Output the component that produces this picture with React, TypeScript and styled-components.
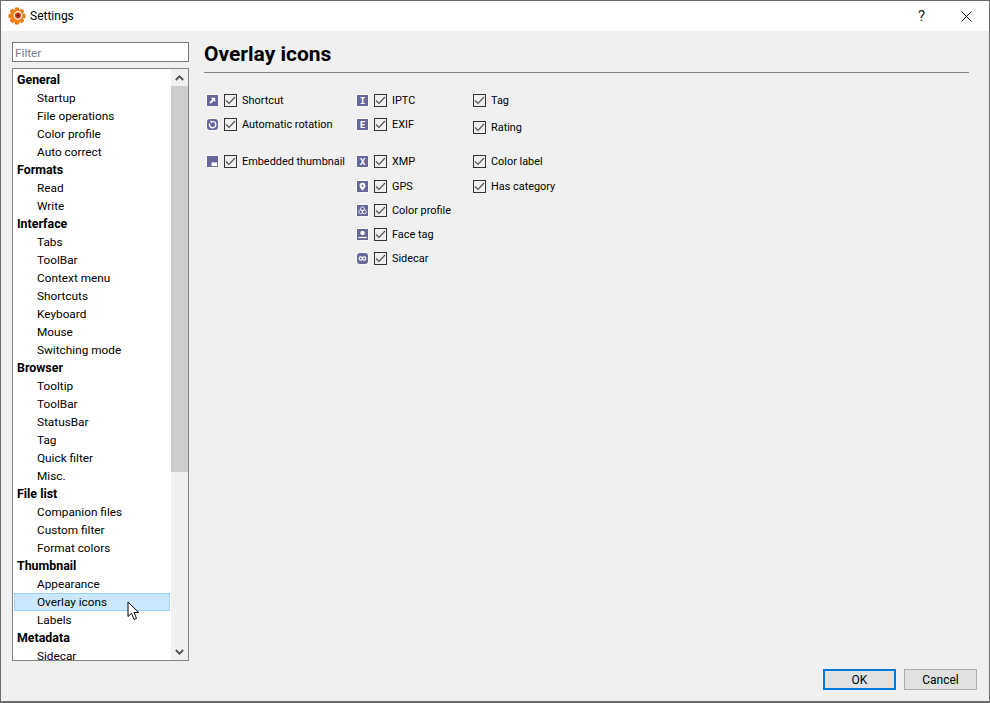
import React from "react"
import styled, { createGlobalStyle } from "styled-components"

const GlobalStyle = createGlobalStyle`
  html, body {
    margin: 0;
    padding: 0;
    background: #2b2b2b;
  }
  body {
    font-family: Roboto, "Noto Sans", sans-serif;
    font-size: 12px;
    color: #000;
  }
`

const Window = styled.div`
  box-sizing: border-box;
  width: 990px;
  height: 703px;
  border: 1px solid #6d6d6d;
  border-bottom-width: 2px;
  background: #f0f0f0;
  display: flex;
  flex-direction: column;
  overflow: hidden;
`

const TitleBar = styled.div`
  height: 30px;
  flex: none;
  background: #fff;
  display: flex;
  align-items: center;
  padding-left: 7px;
`

const TitleText = styled.span`
  margin-left: 4px;
  flex: 1;
  font-size: 12px;
  padding-bottom: 1px;
`

const TitleButton = styled.div`
  width: 45px;
  height: 30px;
  display: flex;
  align-items: center;
  justify-content: center;
  font-size: 15px;
  color: #222;
`

const Body = styled.div`
  flex: 1;
  min-height: 0;
  display: flex;
  padding: 11px 20px 0 11px;
`

const Sidebar = styled.div`
  width: 177px;
  flex: none;
  display: flex;
  flex-direction: column;
  gap: 6px;
`

const FilterInput = styled.div`
  box-sizing: border-box;
  height: 20px;
  border: 1px solid #7a7a7a;
  background: #fff;
  color: #7a7a8a;
  font-size: 11.8px;
  line-height: 20px;
  padding-left: 2px;
`

const TreeBox = styled.div`
  box-sizing: border-box;
  position: relative;
  height: 595px;
  border: 1px solid #828282;
  background: #fff;
  display: flex;
  overflow: hidden;
`

const TreeRows = styled.div`
  flex: 1;
  min-width: 0;
  padding: 2px 1px 0 1px;
`

const TreeRow = styled.div<{ $group?: boolean; $selected?: boolean }>`
  box-sizing: border-box;
  height: 18px;
  line-height: 16px;
  padding-left: ${p => (p.$group ? "2px" : "22px")};
  font-size: ${p => (p.$group ? "12.4px" : "11.8px")};
  font-weight: ${p => (p.$group ? 700 : 400)};
  border: 1px solid ${p => (p.$selected ? "#99d1ff" : "transparent")};
  background: ${p => (p.$selected ? "#cce8ff" : "transparent")};
  white-space: nowrap;
`

const ScrollBar = styled.div`
  width: 17px;
  flex: none;
  background: #f0f0f0;
  display: flex;
  flex-direction: column;
`

const ScrollArrow = styled.div`
  height: 17px;
  flex: none;
  display: flex;
  align-items: center;
  justify-content: center;
`

const ScrollTrack = styled.div`
  flex: 1;
`

const ScrollThumb = styled.div`
  height: 386px;
  background: #cdcdcd;
`

const CursorMark = styled.svg`
  position: absolute;
  left: 114px;
  top: 532px;
`

const Content = styled.div`
  flex: 1;
  min-width: 0;
  margin-left: 15px;
  display: flex;
  flex-direction: column;
`

const Heading = styled.h1`
  margin: 0;
  font-size: 21px;
  line-height: 25px;
  font-weight: 700;
  padding-bottom: 5px;
  border-bottom: 1px solid #808080;
`

const Columns = styled.div`
  display: flex;
  padding: 15px 0 0 3px;
`

const OptionColumn = styled.div<{ $width: number }>`
  width: ${p => p.$width}px;
  flex: none;
  display: flex;
  flex-direction: column;
`

const OptionRow = styled.div<{ $gap?: number }>`
  height: 24px;
  margin-top: ${p => p.$gap ?? 0}px;
  display: flex;
  align-items: center;
  white-space: nowrap;
  font-size: 10.9px;
`

const OverlayIcon = styled.span<{ $round?: boolean }>`
  box-sizing: border-box;
  width: 11px;
  height: 11px;
  flex: none;
  margin-right: 6px;
  border-radius: ${p => (p.$round ? "3px" : "0")};
  background: #66669a;
  box-shadow: 0 0 0 1px rgba(255, 255, 255, 0.55);
  color: #fff;
  font-family: "DejaVu Sans Mono", monospace;
  font-weight: 700;
  font-size: 9.5px;
  line-height: 11px;
  display: flex;
  align-items: center;
  justify-content: center;
  overflow: hidden;
`

const CheckBox = styled.span`
  box-sizing: border-box;
  width: 13px;
  height: 13px;
  flex: none;
  margin-right: 5px;
  border: 1px solid #333;
  display: flex;
  align-items: center;
  justify-content: center;
`

const Footer = styled.div`
  height: 40px;
  flex: none;
  display: flex;
  justify-content: flex-end;
  gap: 8px;
  padding: 8px 12px 0 0;
  box-sizing: border-box;
`

const DialogButton = styled.div<{ $primary?: boolean }>`
  box-sizing: border-box;
  width: 73px;
  height: 21px;
  background: #e1e1e1;
  border: ${p => (p.$primary ? "2px solid #0078d7" : "1px solid #adadad")};
  display: flex;
  align-items: center;
  justify-content: center;
`

type TreeEntry = [label: string, group?: boolean]

const treeEntries: TreeEntry[] = [
  ["General", true],
  ["Startup"],
  ["File operations"],
  ["Color profile"],
  ["Auto correct"],
  ["Formats", true],
  ["Read"],
  ["Write"],
  ["Interface", true],
  ["Tabs"],
  ["ToolBar"],
  ["Context menu"],
  ["Shortcuts"],
  ["Keyboard"],
  ["Mouse"],
  ["Switching mode"],
  ["Browser", true],
  ["Tooltip"],
  ["ToolBar"],
  ["StatusBar"],
  ["Tag"],
  ["Quick filter"],
  ["Misc."],
  ["File list", true],
  ["Companion files"],
  ["Custom filter"],
  ["Format colors"],
  ["Thumbnail", true],
  ["Appearance"],
  ["Overlay icons"],
  ["Labels"],
  ["Metadata", true],
  ["Sidecar"],
]

const Logo = () => (
  <svg width="18" height="18" viewBox="0 0 18 18">
    <g fill="#ee7a12">
      {[0, 45, 90, 135, 180, 225, 270, 315].map(a => (
        <rect key={a} x="6.8" y="0.5" width="4.4" height="4" rx="1" transform={`rotate(${a} 9 9)`} />
      ))}
    </g>
    <circle cx="9" cy="9" r="6.6" fill="#f0841a" />
    <circle cx="10" cy="8.5" r="4.4" fill="#fdeede" />
    <circle cx="10" cy="8.5" r="3" fill="#d0341c" />
    <circle cx="10" cy="8.5" r="1.1" fill="#6a1208" />
  </svg>
)

const Check = () => (
  <svg width="11" height="11" viewBox="0 0 11 11">
    <path d="M1 5.5 L4 8.5 L10 2" fill="none" stroke="#555" strokeWidth="1.2" />
  </svg>
)

const Chevron = ({ up }: { up?: boolean }) => (
  <svg width="9" height="6" viewBox="0 0 9 6">
    <path
      d={up ? "M0.8 5 L4.5 1.3 L8.2 5" : "M0.8 1 L4.5 4.7 L8.2 1"}
      fill="none"
      stroke="#505050"
      strokeWidth="1.8"
    />
  </svg>
)

const glyphs: Record<string, React.ReactNode> = {
  shortcut: <path d="M4 3h5v5L7.4 6.4 4.2 9.6 2.6 8l3.2-3.2z" fill="#fff" />,
  rotation: (
    <>
      <path d="M6.4 2.6a3.5 3.5 0 1 1-3.6 2.4" fill="none" stroke="#fff" strokeWidth="1.6" />
      <path d="M3.4 1.6l3.4 1-2.4 2.4z" fill="#fff" />
    </>
  ),
  thumbnail: <rect x="5" y="7" width="6" height="4" fill="#fff" />,
  gps: (
    <>
      <path d="M6 2a3.2 3.2 0 0 1 3.2 3.2C9.2 7.4 6 10.5 6 10.5S2.8 7.4 2.8 5.2A3.2 3.2 0 0 1 6 2z" fill="#fff" />
      <circle cx="6" cy="5.2" r="1.2" fill="#66669a" />
    </>
  ),
  profile: (
    <g fill="none" stroke="#fff" strokeWidth="0.9">
      <circle cx="6" cy="4.2" r="2.2" />
      <circle cx="4.1" cy="7.4" r="2.2" />
      <circle cx="7.9" cy="7.4" r="2.2" />
    </g>
  ),
  face: (
    <>
      <circle cx="6" cy="4.4" r="2.4" fill="#fff" />
      <rect x="1.5" y="8.6" width="9" height="1.3" fill="#fff" />
    </>
  ),
  sidecar: (
    <g fill="none" stroke="#fff" strokeWidth="1.2">
      <circle cx="4.1" cy="6" r="1.8" />
      <circle cx="7.9" cy="6" r="1.8" />
    </g>
  ),
}

const roundIcons = ["rotation", "sidecar"]

const Icon = ({ name, letter }: { name?: string; letter?: string }) => (
  <OverlayIcon $round={roundIcons.includes(name ?? "")}>
    {letter ?? (
      <svg width="11" height="11" viewBox="0 0 12 12">
        {glyphs[name ?? ""]}
      </svg>
    )}
  </OverlayIcon>
)

const Option = ({
  label,
  gap,
  icon,
  letter,
}: {
  label: string
  gap?: number
  icon?: string
  letter?: string
}) => (
  <OptionRow $gap={gap}>
    {(icon || letter) && <Icon name={icon} letter={letter} />}
    <CheckBox>
      <Check />
    </CheckBox>
    <span>{label}</span>
  </OptionRow>
)

export default function App() {
  return (
    <>
      <GlobalStyle />
      <Window>
        <TitleBar>
          <Logo />
          <TitleText>Settings</TitleText>
          <TitleButton>?</TitleButton>
          <TitleButton>
            <svg width="11" height="11" viewBox="0 0 11 11">
              <path d="M0.5 0.5 L10.5 10.5 M10.5 0.5 L0.5 10.5" stroke="#111" strokeWidth="1" />
            </svg>
          </TitleButton>
        </TitleBar>
        <Body>
          <Sidebar>
            <FilterInput>Filter</FilterInput>
            <TreeBox>
              <TreeRows>
                {treeEntries.map(([label, group], i) => (
                  <TreeRow key={i} $group={group} $selected={label === "Overlay icons"}>
                    {label}
                  </TreeRow>
                ))}
              </TreeRows>
              <ScrollBar>
                <ScrollArrow>
                  <Chevron up />
                </ScrollArrow>
                <ScrollThumb />
                <ScrollTrack />
                <ScrollArrow>
                  <Chevron />
                </ScrollArrow>
              </ScrollBar>
              <CursorMark width="13" height="20" viewBox="0 0 13 20">
                <path
                  d="M1 1 L1 15.5 L4.5 12.3 L7 18.5 L9.5 17.4 L7 11.5 L11.7 11.5 Z"
                  fill="#fff"
                  stroke="#000"
                  strokeWidth="1"
                />
              </CursorMark>
            </TreeBox>
          </Sidebar>
          <Content>
            <Heading>Overlay icons</Heading>
            <Columns>
              <OptionColumn $width={150}>
                <Option icon="shortcut" label="Shortcut" />
                <Option icon="rotation" label="Automatic rotation" />
                <Option icon="thumbnail" label="Embedded thumbnail" gap={13} />
              </OptionColumn>
              <OptionColumn $width={116}>
                <Option letter="I" label="IPTC" />
                <Option letter="E" label="EXIF" />
                <Option letter="X" label="XMP" gap={13} />
                <Option icon="gps" label="GPS" gap={1} />
                <Option icon="profile" label="Color profile" />
                <Option icon="face" label="Face tag" />
                <Option icon="sidecar" label="Sidecar" />
              </OptionColumn>
              <OptionColumn $width={120}>
                <Option label="Tag" />
                <Option label="Rating" gap={3} />
                <Option label="Color label" gap={10} />
                <Option label="Has category" gap={1} />
              </OptionColumn>
            </Columns>
          </Content>
        </Body>
        <Footer>
          <DialogButton $primary>OK</DialogButton>
          <DialogButton>Cancel</DialogButton>
        </Footer>
      </Window>
    </>
  )
}
